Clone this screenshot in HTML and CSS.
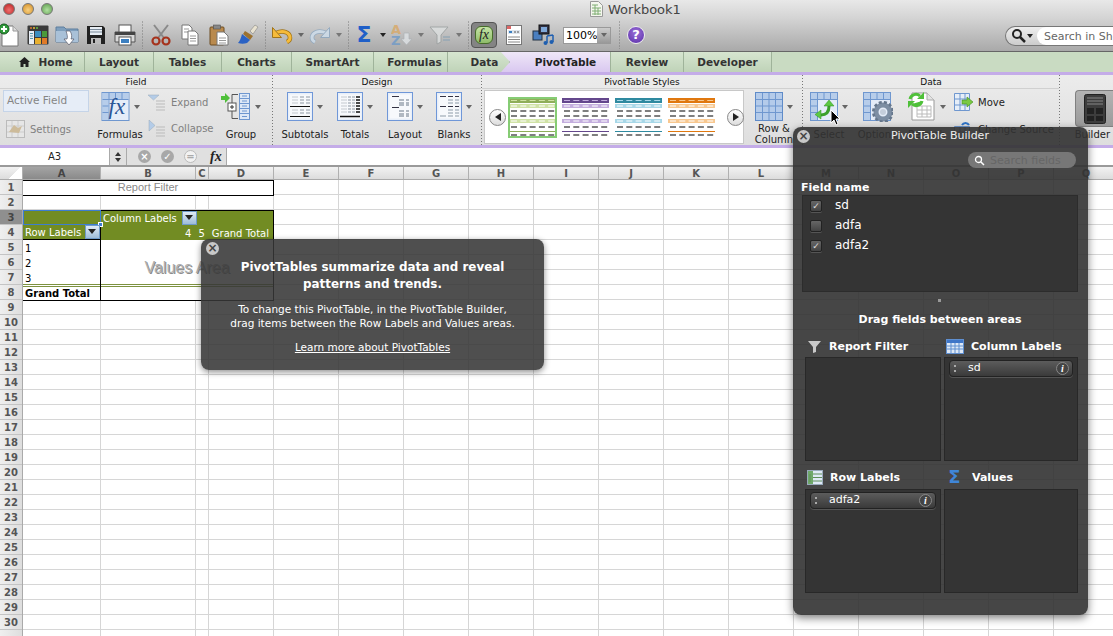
FILE: index.html
```html
<!DOCTYPE html>
<html>
  <head>
    <title>Workbook1</title>
    <link rel="stylesheet" href="styles.css">
  </head>
  <body>
    <svg class="defs" width="0" height="0">
      <symbol id="grid" viewBox="0 0 28 29">
        <rect x=".5" y=".5" width="27" height="28" fill="#e4ecf8" stroke="#6f97cf"/>
        <path d="M1 1h26v6H1zM1 7h6v21H1z" fill="#b7cdea"/>
        <path d="M7.500 1v27M14 1v6M20.500 1v6M1 7.500h26M1 14h6M1 20.500h6" stroke="#6f97cf" fill="none"/>
      </symbol>
      <symbol id="grid2" viewBox="0 0 28 29">
        <rect x=".5" y=".5" width="27" height="28" fill="#b4cbea" stroke="#5f8bc8"/>
        <path d="M7.500 1v27M14 1v27M20.500 1v27M1 7.500h26M1 14h26M1 20.500h26" stroke="#6f97cf" fill="none"/>
      </symbol>
      <symbol id="sheet" viewBox="0 0 26 29">
        <rect x=".5" y=".5" width="25" height="28" fill="#e8eff9" stroke="#6f97d8"/>
        <rect x="2.500" y="2.500" width="21" height="24" fill="#f7f9fc"/>
      </symbol>
      <symbol id="thumb" viewBox="0 0 47 39">
        <rect width="47" height="39" fill="#fff"/>
        <rect width="47" height="5" fill="var(--d)"/>
        <rect y="6" width="47" height="4" fill="var(--l)"/>
        <rect y="21" width="47" height="4" fill="var(--l)"/>
        <rect y="33" width="47" height="1" fill="var(--d)"/>
        <path d="M2 2.500h44" stroke="var(--l)" stroke-dasharray="6 3.300" fill="none"/>
        <path d="M2 8h44M2 23h44" stroke="#fff" stroke-dasharray="6 3.300" fill="none"/>
        <path d="M2 13h44M2 18h44M2 29h44M2 37h44" stroke="#555" stroke-width="1.500" stroke-dasharray="6 3.300" fill="none"/>
      </symbol>
    </svg>

    <div class="titlebar">
      <div class="lights">
        <span class="light red"></span>
        <span class="light amber"></span>
        <span class="light green"></span>
      </div>
      <div class="title">
        <svg width="13" height="16" viewBox="0 0 13 16"><path d="M.5.5h8l4 4v11H.5z" fill="#f4f6ee" stroke="#999"/><path d="M2 4h6M2 7h9M2 10h9M2 13h9M5 4v10M8 7v7" stroke="#7fae72" fill="none"/></svg>
        <span>Workbook1</span>
      </div>
    </div>

    <div class="toolbar">
      <span class="slot first">
        <svg width="22" height="24" viewBox="0 0 22 24"><path d="M4 3h11l5 5v15H4z" fill="#fff" stroke="#777"/><path d="M15 3v5h5" fill="#ddd" stroke="#999"/><circle cx="6" cy="6" r="5" fill="#2f9a3a" stroke="#14581c"/><path d="M6 3v6M3 6h6" stroke="#fff" stroke-width="2"/></svg>
      </span>
      <span class="slot">
        <svg width="22" height="20" viewBox="0 0 22 20"><rect x=".5" y=".5" width="21" height="19" rx="1" fill="#3a3a3a"/><circle cx="4" cy="3" r="1" fill="#d73"/><circle cx="7" cy="3" r="1" fill="#eb3"/><circle cx="10" cy="3" r="1" fill="#6b4"/><rect x="2" y="6" width="5" height="13" fill="#e8eef6"/><path d="M3 8.500h3M3 11h3M3 13.500h3" stroke="#59a"/><rect x="8" y="6" width="6" height="6" fill="#3c8fc0"/><rect x="15" y="6" width="5" height="6" fill="#4a9a3a"/><rect x="8" y="13" width="6" height="6" fill="#e8b030"/><rect x="15" y="13" width="5" height="6" fill="#e07a28"/></svg>
      </span>
      <span class="slot">
        <svg width="24" height="22" viewBox="0 0 24 22"><path d="M1 3h8l2 2h12v13H1z" fill="#7f9fbd" stroke="#5f7f9e"/><path d="M1 7h22v11H1z" fill="#a9c1d8"/><path d="M11 7h4c2 3 2 6 1 8h3l-5 6-5-6h3c1-2 0-5-1-8z" fill="#fff" stroke="#445" stroke-width=".6"/></svg>
      </span>
      <span class="slot">
        <svg width="20" height="20" viewBox="0 0 20 20"><path d="M1 1h16l2 2v16H1z" fill="#222"/><rect x="4" y="2" width="12" height="8" fill="#e8eef4"/><rect x="5" y="13" width="10" height="6" fill="#bbb"/><rect x="7" y="14" width="2" height="4" fill="#222"/><path d="M4 4.500h12M4 7h12" stroke="#7a8a9a"/></svg>
      </span>
      <span class="slot">
        <svg width="24" height="22" viewBox="0 0 24 22"><rect x="6" y="1" width="12" height="8" fill="#fff" stroke="#555"/><path d="M2 8h20v10H2z" fill="#d8d8d8" stroke="#555"/><rect x="2" y="8" width="20" height="3" fill="#444"/><rect x="6" y="13" width="12" height="8" fill="#fff" stroke="#555"/><rect x="8" y="15" width="8" height="4" fill="#3c7fc0"/></svg>
      </span>
      <span class="tb-sep"></span>
      <span class="slot">
        <svg width="20" height="22" viewBox="0 0 20 22"><path d="M3 1l10 13M17 1L7 14" stroke="#8a8a8a" stroke-width="2" fill="none"/><circle cx="5" cy="17" r="3.500" fill="none" stroke="#a5331d" stroke-width="2.200"/><circle cx="15" cy="17" r="3.500" fill="none" stroke="#a5331d" stroke-width="2.200"/></svg>
      </span>
      <span class="slot">
        <svg width="20" height="22" viewBox="0 0 20 22"><path d="M2 1h7l3 3v11H2z" fill="#fff" stroke="#777"/><path d="M4 5h5M4 8h5" stroke="#999"/><path d="M8 7h7l3 3v11H8z" fill="#fff" stroke="#777"/><path d="M10 12h6M10 14.500h6M10 17h6" stroke="#999"/></svg>
      </span>
      <span class="slot">
        <svg width="20" height="22" viewBox="0 0 20 22"><rect x="1" y="3" width="14" height="18" rx="1" fill="#b98a4e" stroke="#6d4d22"/><rect x="4.500" y="1" width="7" height="4" fill="#888" stroke="#444" stroke-width=".5"/><path d="M8 8h7l4 4v9H8z" fill="#fff" stroke="#777"/><path d="M10 14h7M10 16.500h7M10 19h7" stroke="#999"/></svg>
      </span>
      <span class="slot">
        <svg width="22" height="22" viewBox="0 0 22 22"><path d="M13 7l5-6 3 2-5 7z" fill="#e8e2d0" stroke="#777" stroke-width=".5"/><path d="M8 7l8 5-3 4-7-6z" fill="#9c7230"/><path d="M5 10l8 6-3 3c-3 1-6 1-9 0 2-2 3-5 4-9z" fill="#2b62c4"/></svg>
      </span>
      <span class="tb-sep short"></span>
      <span class="split">
        <svg width="22" height="18" viewBox="0 0 22 18"><path d="M5 7c7-3 14-1 14 5 0 2-1 3-3 4" fill="none" stroke="#a07418" stroke-width="4.500"/><path d="M5 7c7-3 14-1 14 5 0 2-1 3-3 4" fill="none" stroke="#f6bb3a" stroke-width="3"/><path d="M1.500 1.500v10h9z" fill="#f6bb3a" stroke="#a07418"/></svg>
        <i class="drop"></i>
      </span>
      <span class="split dim">
        <svg width="22" height="18" viewBox="0 0 22 18"><path d="M17 7C10 4 3 6 3 12c0 2 1 3 3 4" fill="none" stroke="#8aa5bf" stroke-width="4.500"/><path d="M17 7C10 4 3 6 3 12c0 2 1 3 3 4" fill="none" stroke="#cfdfee" stroke-width="3"/><path d="M20.500 1.500v10h-9z" fill="#cfdfee" stroke="#8aa5bf"/></svg>
        <i class="drop"></i>
      </span>
      <span class="tb-sep tiny"></span>
      <span class="split">
        <span class="sigma">Σ</span>
        <i class="drop dark"></i>
      </span>
      <span class="split dim">
        <svg width="24" height="24" viewBox="0 0 24 24"><text x="1" y="11" class="az-a">A</text><text x="1" y="22" class="az-z">Z</text><path d="M14 10h5v6h3l-5.500 6L11 16h3z" fill="#dfe3e6" stroke="#aab0b5" stroke-width=".7"/></svg>
        <i class="drop"></i>
      </span>
      <span class="split dim">
        <svg width="22" height="20" viewBox="0 0 22 20"><path d="M1 2h18l-7 8v7l-4 2v-9z" fill="#dde0e0" stroke="#9a9f9f"/><path d="M14 12h7M14 15h7" stroke="#8fa5b5" stroke-width="1.500"/></svg>
        <i class="drop"></i>
      </span>
      <span class="tb-sep tiny"></span>
      <span class="fx-btn"><span class="fx-inner">fx</span></span>
      <span class="slot gap2">
        <svg width="16" height="20" viewBox="0 0 16 20"><rect x=".5" y=".5" width="15" height="19" fill="#fff" stroke="#777"/><rect x="1" y="1" width="4" height="3" fill="#d66"/><rect x="2" y="5" width="12" height="4" fill="#dfe6ee"/><rect x="3" y="6" width="3" height="2" fill="#3c7fc0"/><path d="M8 7h2M11 7h2" stroke="#555"/><path d="M2 12h12M2 14.500h12M2 17h12" stroke="#888"/></svg>
      </span>
      <span class="slot">
        <svg width="22" height="22" viewBox="0 0 22 22"><rect x="1" y="7" width="9" height="9" fill="#4a7fc0" stroke="#234"/><rect x="7" y="1" width="10" height="9" fill="#334" stroke="#111"/><path d="M9 3h6v5H9z" fill="#7fa8d8"/><path d="M15 12v7M21 11v7M15 12l6-1" stroke="#1f5fb0" stroke-width="1.500" fill="none"/><circle cx="13.500" cy="19" r="2" fill="#1f5fb0"/><circle cx="19.500" cy="18" r="2" fill="#1f5fb0"/></svg>
      </span>
      <span class="zoom"><span class="zoom-val">100%</span><span class="zoom-arrow"><i class="drop"></i></span></span>
      <span class="tb-sep wide"></span>
      <span class="help">?</span>
      <span class="search">
        <span class="search-mode">
          <svg width="15" height="15" viewBox="0 0 15 15"><circle cx="6" cy="6" r="4" fill="none" stroke="#222" stroke-width="2"/><path d="M9 9l5 5" stroke="#222" stroke-width="2.500"/></svg>
          <i class="drop dark"></i>
        </span>
        <span class="search-input">Search in Sheet</span>
      </span>
    </div>

    <div class="tabs">
      <span class="tab t-home"><svg width="11" height="10" viewBox="0 0 11 10"><path d="M5.500 0L11 5H9.500v5h-3V7h-2v3h-3V5H0z" fill="#222"/></svg>Home</span>
      <span class="tab t-layout">Layout</span>
      <span class="tab t-tables">Tables</span>
      <span class="tab t-charts">Charts</span>
      <span class="tab t-smart">SmartArt</span>
      <span class="tab t-formulas">Formulas</span>
      <span class="tab t-data">Data</span>
      <span class="tab t-pivot">PivotTable</span>
      <span class="tab t-review">Review</span>
      <span class="tab t-dev">Developer</span>
    </div>

    <div class="ribbon">
      <section class="group g-field">
        <h4>Field</h4>
        <div class="group-body">
          <div class="field-col">
            <div class="active-field">Active Field</div>
            <div class="small-row faded">
              <svg width="19" height="18" viewBox="0 0 19 18"><rect x=".5" y=".5" width="18" height="17" fill="#e6e6e6" stroke="#bbb"/><path d="M1 6h17M1 12h17M6 1v16M12 1v16" stroke="#ccc"/><path d="M3 12l5-7 4 3 4-2-3 7z" fill="#cdbb9a"/></svg>
              <span>Settings</span>
            </div>
          </div>
          <div class="big w50">
            <div class="big-icon">
              <span class="fx-icon"><svg width="29" height="29"><use href="#grid"/></svg><em>fx</em></span>
              <i class="drop"></i>
            </div>
            <span class="label">Formulas</span>
          </div>
          <div class="small-col w70">
            <div class="small-row faded">
              <svg width="18" height="17" viewBox="0 0 18 17"><path d="M0 1h11L5.500 6z" fill="#b4cce8" stroke="#9ab" stroke-width=".5"/><path d="M8 7h9M8 10h9M8 13h9M8 16h9" stroke="#bbb"/></svg>
              <span>Expand</span>
            </div>
            <div class="small-row faded">
              <svg width="18" height="17" viewBox="0 0 18 17"><path d="M1 0v11l6-5.500z" fill="#b4cce8" stroke="#9ab" stroke-width=".5"/><path d="M8 7h9M8 10h9M8 13h9M8 16h9" stroke="#bbb"/></svg>
              <span>Collapse</span>
            </div>
          </div>
          <div class="big w46">
            <div class="big-icon">
              <svg width="30" height="29" viewBox="0 0 30 29"><path d="M0 4h4V1l5 5-5 5V8H0z" fill="#4fc03a"/><path d="M17 2.500h-6v24h6" fill="none" stroke="#555"/><rect x="7" y="11" width="8" height="8" fill="#fff" stroke="#555"/><path d="M9 15h4M11 13v4" stroke="#333"/><rect x="18.500" y="1.500" width="10" height="26" fill="#dfe9f6" stroke="#6f97cf"/><path d="M18 6.500h11M18 11.500h11M18 16.500h11M18 21.500h11M21 4h5M21 9h5M21 14h5M21 19h5M21 24.500h5" stroke="#6f97cf"/></svg>
              <i class="drop"></i>
            </div>
            <span class="label">Group</span>
          </div>
        </div>
      </section>

      <section class="group g-design">
        <h4>Design</h4>
        <div class="group-body">
          <div class="big w50">
            <div class="big-icon">
              <svg width="26" height="29" viewBox="0 0 26 29"><use href="#sheet" width="26" height="29"/><path d="M5 5h6M5 8h6M5 11h6M5 18h6M5 21h6" stroke="#c4c9cf"/><path d="M13 5h4M19 5h4M13 8h4M19 8h4M13 11h4M19 11h4M13 18h4M19 18h4M13 21h4M19 21h4" stroke="#8d97a3"/><path d="M3 14.500h20M3 24.500h20" stroke="#111"/></svg>
              <i class="drop"></i>
            </div>
            <span class="label">Subtotals</span>
          </div>
          <div class="big w50">
            <div class="big-icon">
              <svg width="26" height="29" viewBox="0 0 26 29"><use href="#sheet" width="26" height="29"/><path d="M4 5h6M4 8h6M4 11h6M4 14h6M4 17h6M4 20h6" stroke="#c4c9cf"/><path d="M11 5h3M15 5h3M11 8h3M15 8h3M11 11h3M15 11h3M11 14h3M15 14h3M11 17h3M15 17h3M11 20h3M15 20h3" stroke="#8d97a3"/><path d="M19 5h4M19 8h4M19 11h4M19 14h4M19 17h4M19 20h4" stroke="#111" stroke-width="1.500"/><path d="M3 24.500h20" stroke="#111" stroke-width="1.500"/></svg>
              <i class="drop"></i>
            </div>
            <span class="label">Totals</span>
          </div>
          <div class="big w50">
            <div class="big-icon">
              <svg width="26" height="29" viewBox="0 0 26 29"><use href="#sheet" width="26" height="29"/><path d="M5 4.500h7M5 15.500h7" stroke="#334" stroke-width="1.200"/><path d="M12 8h5M19 8h3M12 11h5M19 11h3M12 13h5M19 13h3M12 19h5M19 19h3M12 22h5M19 22h3M12 24h5M19 24h3" stroke="#6a7888"/></svg>
              <i class="drop"></i>
            </div>
            <span class="label">Layout</span>
          </div>
          <div class="big w48">
            <div class="big-icon">
              <svg width="26" height="29" viewBox="0 0 26 29"><use href="#sheet" width="26" height="29"/><path d="M4 4.500h6M12 4.500h5M19 4.500h4M4 14.500h6M12 14.500h5M19 14.500h4" stroke="#334" stroke-width="1.200"/><path d="M12 8h5M19 8h4M12 11h5M19 11h4M12 18h5M19 18h4M12 21h5M19 21h4M4 24h6M12 24h5M19 24h4" stroke="#8d9ba8"/></svg>
              <i class="drop"></i>
            </div>
            <span class="label">Blanks</span>
          </div>
        </div>
      </section>

      <section class="group g-styles">
        <h4>PivotTable Styles</h4>
        <div class="group-body">
          <div class="gallery">
            <span class="round">
              <svg width="6" height="8" viewBox="0 0 6 8"><path d="M6 0v8L0 4z" fill="#222"/></svg>
            </span>
            <svg class="thumb t-green" width="47" height="39"><use href="#thumb"/></svg>
            <svg class="thumb t-purple" width="47" height="39"><use href="#thumb"/></svg>
            <svg class="thumb t-blue" width="47" height="39"><use href="#thumb"/></svg>
            <svg class="thumb t-orange" width="47" height="39"><use href="#thumb"/></svg>
            <span class="round next">
              <svg width="6" height="8" viewBox="0 0 6 8"><path d="M0 0v8l6-4z" fill="#222"/></svg>
            </span>
          </div>
          <div class="big w58">
            <div class="big-icon">
              <svg width="28" height="29"><use href="#grid2"/></svg>
              <i class="drop"></i>
            </div>
            <span class="label two">Row &amp;<br>Column</span>
          </div>
        </div>
      </section>

      <section class="group g-data">
        <h4>Data</h4>
        <div class="group-body">
          <div class="big w46">
            <div class="big-icon">
              <span class="fx-icon">
                <svg width="28" height="29"><use href="#grid"/></svg>
                <svg class="over" width="28" height="29" viewBox="0 0 28 29"><path d="M11 23c5 0 8-3 8-9" fill="none" stroke="#3aa02c" stroke-width="3"/><path d="M11 18v9l-6-4.500zM14 14h10l-5-6z" fill="#5cc944" stroke="#2f8f20" stroke-width=".5"/></svg>
              </span>
              <i class="drop"></i>
            </div>
            <span class="label">Select</span>
          </div>
          <div class="big w50">
            <div class="big-icon">
              <span class="fx-icon">
                <svg width="28" height="29"><use href="#grid"/></svg>
                <svg class="over" width="30" height="30" viewBox="0 0 30 30"><circle cx="20" cy="20" r="7" fill="none" stroke="#7d8ea3" stroke-width="5"/><circle cx="20" cy="20" r="9.800" fill="none" stroke="#66778c" stroke-width="2.500" stroke-dasharray="3 2.200"/><circle cx="20" cy="20" r="3" fill="#c5cedb"/></svg>
              </span>
            </div>
            <span class="label">Options</span>
          </div>
          <div class="big w46 ml2">
            <div class="big-icon">
              <span class="fx-icon">
                <svg width="28" height="29" viewBox="0 0 28 29"><path d="M4 1h15l7 7v20H4z" fill="#fff" stroke="#999"/><path d="M19 1v7h7" fill="#e4e4e4" stroke="#aaa"/><path d="M9 14h14v11H9zM9 18h14M9 22h14M14 14v11M19 14v11" fill="none" stroke="#bbb"/></svg>
                <svg class="over" width="28" height="29" viewBox="0 0 28 29"><path d="M2 7a6 6 0 0 1 10-3" fill="none" stroke="#4fc03a" stroke-width="3"/><path d="M9 7h7V0zM14 9a6 6 0 0 1-10 3" fill="#4fc03a"/><path d="M14 9a6 6 0 0 1-10 3" fill="none" stroke="#4fc03a" stroke-width="3"/><path d="M7 9H0v7z" fill="#4fc03a"/></svg>
              </span>
              <i class="drop"></i>
            </div>
            <span class="label">Refresh</span>
          </div>
          <div class="small-col move-col">
            <div class="small-row">
              <svg width="19" height="18" viewBox="0 0 19 18"><path d="M.5.5h15v17H.5zM.5 6h15M.5 12h15M6 .5v17M11 .5v17" fill="#e6eef8" stroke="#6f97cf"/><path d="M8 7h5V4l6 5-6 5v-3H8z" fill="#7ac943" stroke="#3f8f1f" stroke-width=".6"/></svg>
              <span class="dark">Move</span>
            </div>
            <div class="small-row">
              <svg width="19" height="18" viewBox="0 0 19 18"><path d="M.5 6.500h15v11H.5zM.5 12h15M6 6v12M11 6v12" fill="#e6eef8" stroke="#6f97cf"/><path d="M8 5a4 4 0 0 1 7 0" fill="none" stroke="#2f74c8" stroke-width="2"/></svg>
              <span class="dark">Change Source</span>
            </div>
          </div>
        </div>
      </section>

      <section class="group g-builder">
        <div class="builder-btn">
          <svg width="22" height="30" viewBox="0 0 22 30"><rect x=".5" y=".5" width="21" height="29" rx="2" fill="#3d3d3d" stroke="#222"/><path d="M3 4h16M3 7h16M3 10h16" stroke="#888"/><rect x="3" y="14" width="7" height="6" fill="#222"/><rect x="12" y="14" width="7" height="6" fill="#222"/><rect x="3" y="22" width="7" height="5" fill="#222"/><rect x="12" y="22" width="7" height="5" fill="#222"/></svg>
        </div>
        <span class="label builder-label">Builder</span>
      </section>
    </div>

    <div class="formula-bar">
      <div class="name-box">A3</div>
      <div class="stepper"><i class="up"></i><i class="down"></i></div>
      <div class="fx-tools">
        <span class="circle">×</span>
        <span class="circle">✓</span>
        <span class="circle pale">=</span>
        <span class="fx-label">fx</span>
      </div>
      <div class="formula-input"></div>
    </div>

    <div class="col-head">
      <span class="corner"></span>
      <span class="ch w-a selected">A</span>
      <span class="ch w-b">B</span>
      <span class="ch w-c">C</span>
      <span class="ch w-d">D</span>
      <span class="ch">E</span><span class="ch">F</span><span class="ch">G</span><span class="ch">H</span><span class="ch">I</span>
      <span class="ch">J</span><span class="ch">K</span><span class="ch">L</span><span class="ch">M</span><span class="ch">N</span>
      <span class="ch">O</span><span class="ch">P</span><span class="ch">Q</span>
    </div>

    <div class="sheet">
      <div class="row-head">
        <span>1</span><span>2</span><span class="selected">3</span><span>4</span><span>5</span><span>6</span><span>7</span><span>8</span><span>9</span><span>10</span>
        <span>11</span><span>12</span><span>13</span><span>14</span><span>15</span><span>16</span><span>17</span><span>18</span><span>19</span><span>20</span>
        <span>21</span><span>22</span><span>23</span><span>24</span><span>25</span><span>26</span><span>27</span><span>28</span><span>29</span><span>30</span><span></span>
      </div>
      <div class="cells">
        <div class="pivot">
          <div class="pv-filter">Report Filter</div>
          <div class="pv-a3"><i class="corner-handle"></i></div>
          <div class="pv-a4">Row Labels<i class="filter-btn"></i></div>
          <div class="pv-head">
            <div class="pv-collabels">Column Labels<i class="filter-btn"></i></div>
            <div class="pv-colvals"><span>4</span><span>5</span><span>Grand Total</span></div>
          </div>
          <div class="pv-rows">
            <span>1</span><span>2</span><span>3</span>
            <span class="total">Grand Total</span>
          </div>
          <div class="pv-values"><span>Values Area</span></div>
        </div>
      </div>
    </div>

    <div class="bubble">
      <span class="close">×</span>
      <h3>PivotTables summarize data and reveal<br>patterns and trends.</h3>
      <p>To change this PivotTable, in the PivotTable Builder,<br>drag items between the Row Labels and Values areas.</p>
      <a class="learn">Learn more about PivotTables</a>
    </div>

    <div class="builder">
      <div class="builder-title">
        <span class="close">×</span>
        <span>PivotTable Builder</span>
      </div>
      <div class="builder-search">
        <svg width="11" height="11" viewBox="0 0 11 11"><circle cx="4.500" cy="4.500" r="3" fill="none" stroke="#fff" stroke-width="1.300"/><path d="M7 7l3 3" stroke="#fff" stroke-width="1.500"/></svg>
        <span>Search fields</span>
      </div>
      <div class="field-name">Field name</div>
      <div class="field-list">
        <div class="field"><i class="check on"></i>sd</div>
        <div class="field"><i class="check"></i>adfa</div>
        <div class="field"><i class="check on"></i>adfa2</div>
      </div>
      <div class="sash"></div>
      <div class="drag-title">Drag fields between areas</div>
      <div class="areas">
        <div class="area">
          <div class="area-title">
            <svg width="15" height="15" viewBox="0 0 15 15"><path d="M1 2h13L9 8v5l-3 1V8z" fill="#c9c9c9"/></svg>
            <span>Report Filter</span>
          </div>
          <div class="area-box"></div>
        </div>
        <div class="area">
          <div class="area-title">
            <svg width="18" height="15" viewBox="0 0 18 15"><rect x=".5" y=".5" width="17" height="14" fill="#dfe9f6" stroke="#5f8fd0"/><rect x="1" y="1" width="16" height="3" fill="#3f76c8"/><path d="M1 7h16M1 10h16M5 4v10M9 4v10M13 4v10" stroke="#5f8fd0"/></svg>
            <span>Column Labels</span>
          </div>
          <div class="area-box">
            <div class="pill"><i class="grip"></i><span>sd</span><i class="info">i</i></div>
          </div>
        </div>
        <div class="area">
          <div class="area-title">
            <svg width="16" height="15" viewBox="0 0 16 15"><rect x=".5" y=".5" width="15" height="14" fill="#dfe9f6" stroke="#9ab"/><rect x="1" y="1" width="5" height="13" fill="#6fa86a"/><path d="M6 4h9M6 7.500h9M6 11h9M3 4v8" stroke="#5f8f5a"/></svg>
            <span>Row Labels</span>
          </div>
          <div class="area-box">
            <div class="pill"><i class="grip"></i><span>adfa2</span><i class="info">i</i></div>
          </div>
        </div>
        <div class="area">
          <div class="area-title">
            <span class="sigma small">Σ</span>
            <span>Values</span>
          </div>
          <div class="area-box"></div>
        </div>
      </div>
    </div>

    <svg class="cursor" width="12" height="17" viewBox="0 0 12 17"><path d="M1 1v13l3-3 2 5 2-1-2-5h4z" fill="#000" stroke="#fff"/></svg>
  </body>
</html>
```

FILE: styles.css
```css
* {
  box-sizing: border-box;
}
html, body {
  margin: 0;
  height: 636px;
  overflow: hidden;
}
body {
  position: relative;
  background: #fff;
  font-family: "DejaVu Sans", sans-serif;
  font-size: 10px;
  color: #222;
}
i {
  font-style: normal;
}
.defs {
  position: absolute;
}

/* title + toolbar */
.titlebar {
  height: 18px;
  display: flex;
  background: linear-gradient(#e8e8e8, #d4d4d4);
}
.lights {
  display: flex;
  gap: 7px;
  padding: 3px 0 0 3px;
}
.light {
  width: 12px;
  height: 12px;
  border-radius: 50%;
  border: 1px solid #777;
}
.light.red { background: radial-gradient(circle at 50% 60%, #f07070, #b81e1e); }
.light.amber { background: radial-gradient(circle at 50% 60%, #f8d080, #d08a20); }
.light.green { background: radial-gradient(circle at 50% 60%, #b0e0a0, #5a9a4a); }
.title {
  position: absolute;
  left: 590px;
  top: 1px;
  display: flex;
  align-items: center;
  gap: 5px;
  font-size: 13px;
  color: #444;
}
.toolbar {
  height: 34px;
  display: flex;
  align-items: center;
  padding-top: 1px;
  background: linear-gradient(#d4d4d4, #a9a9a9);
  border-bottom: 1px solid #666;
}
.slot {
  width: 29px;
  flex: none;
  display: flex;
  justify-content: center;
  align-items: center;
}
.slot.first { margin-left: -6px; }
.slot.gap2 { margin-left: 2px; }
.tb-sep {
  flex: none;
  width: 7px;
  height: 28px;
  background: linear-gradient(#777 50%, transparent 50%) center / 1px 3px repeat-y;
}
.tb-sep.tiny { width: 6px; }
.tb-sep.wide { width: 16px; }
.tb-sep.short { width: 7px; }
.split {
  width: 38px;
  flex: none;
  display: flex;
  align-items: center;
}
.split > :first-child {
  width: 26px;
  flex: none;
  text-align: center;
}
.split .drop { margin-left: 3px; }
.split.dim { opacity: .8; }
.drop {
  display: inline-block;
  flex: none;
  width: 0;
  height: 0;
  border: 3.500px solid transparent;
  border-bottom: 0;
  border-top: 4px solid #666;
}
.drop.dark { border-top-color: #222; }
.sigma {
  color: #1f5fc8;
  font: bold 22px/24px "DejaVu Sans", sans-serif;
}
.az-a {
  font: bold 13px "DejaVu Sans", sans-serif;
  fill: #d9a866;
}
.az-z {
  font: bold 13px "DejaVu Sans", sans-serif;
  fill: #6f9ac8;
}
.fx-btn {
  width: 26px;
  height: 26px;
  flex: none;
  padding: 3px;
  background: #848484;
  border: 1px solid #555;
  border-radius: 4px;
}
.fx-inner {
  display: block;
  height: 18px;
  background: linear-gradient(#c5e4a5, #8fbc6a);
  border: 1px solid #476d2a;
  border-radius: 6px;
  text-align: center;
  font: italic 14px/15px "Liberation Serif", serif;
}
.zoom {
  width: 48px;
  height: 17px;
  margin-left: 6px;
  flex: none;
  display: flex;
  border: 1px solid #999;
}
.zoom-val {
  flex: 1;
  background: #fff;
  font-size: 11px;
  line-height: 15px;
  padding-left: 2px;
  color: #000;
}
.zoom-arrow {
  width: 14px;
  background: linear-gradient(#ccc, #999);
  display: flex;
  align-items: center;
  justify-content: center;
}
.help {
  width: 18px;
  height: 18px;
  flex: none;
  border-radius: 50%;
  background: radial-gradient(circle at 50% 35%, #9a6fd8, #5a2ea8);
  border: 1px solid #eee;
  color: #fff;
  font: bold 13px/16px "DejaVu Sans", sans-serif;
  text-align: center;
}
.search {
  margin-left: auto;
  margin-top: 1px;
  width: 108px;
  flex: none;
  display: flex;
  height: 20px;
  overflow: hidden;
  border: 1px solid #777;
  border-right: 0;
  border-radius: 10px 0 0 10px;
  background: linear-gradient(#eee, #ccc);
}
.search-mode {
  width: 31px;
  flex: none;
  display: flex;
  align-items: center;
  padding-left: 5px;
  gap: 1px;
}
.search-input {
  flex: 1;
  background: #fff;
  border-radius: 10px 0 0 10px;
  padding-left: 7px;
  font-size: 11px;
  line-height: 19px;
  color: #666;
  white-space: nowrap;
  overflow: hidden;
}

/* tabs */
.tabs {
  height: 23px;
  display: flex;
  background: #c9dbc2;
  border-bottom: 3px solid #c4ace8;
}
.tab {
  display: flex;
  align-items: center;
  justify-content: center;
  gap: 8px;
  flex: none;
  font-size: 10.500px;
  font-weight: bold;
  color: #333;
  border-right: 1px solid #9fb39a;
  background: linear-gradient(#d6e5d0, #bfd3b8);
}
.t-home { width: 85px; padding-left: 8px; }
.t-layout { width: 69px; }
.t-tables { width: 68px; }
.t-charts { width: 70px; }
.t-smart { width: 82px; }
.t-formulas { width: 74px; padding-left: 8px; }
.t-data { width: 62px; padding-left: 12px; }
.t-pivot {
  width: 110px;
  margin-left: -9px;
  padding-left: 20px;
  border-right: 1px solid #9fb39a;
  background: linear-gradient(#efe7f8, #d9c8f0);
  color: #222;
  clip-path: polygon(0 0, 100% 0, 100% 100%, 0 100%, 9px 50%);
}
.t-review { width: 73px; }
.t-dev { width: 88px; }

/* ribbon */
.ribbon {
  height: 73px;
  display: flex;
  background: linear-gradient(#ececec, #dedede);
  border-bottom: 3px solid #c4ace8;
}
.group {
  flex: none;
  display: flex;
  flex-direction: column;
  background: linear-gradient(#777 50%, transparent 50%) right top / 1px 3px repeat-y;
  padding-right: 1px;
}
.group h4 {
  margin: 0;
  height: 14px;
  font-size: 9px;
  font-weight: normal;
  line-height: 15px;
  text-align: center;
  color: #111;
  border-bottom: 1px solid #d0d0d0;
}
.group-body {
  display: flex;
  flex: 1;
}
.g-field { width: 273px; }
.g-design { width: 209px; }
.g-styles { width: 321px; }
.g-data { width: 257px; }
.g-builder {
  width: 53px;
  background: none;
  align-items: flex-end;
  padding: 15px 0 0;
}
.g-field .group-body { padding-left: 3px; }
.g-design .group-body { padding-left: 7px; }
.g-styles .group-body { padding-left: 2px; }
.g-data .group-body { padding-left: 3px; }
.field-col {
  width: 86px;
  margin-right: 6px;
  flex: none;
}
.active-field {
  height: 22px;
  margin-top: 1px;
  margin-bottom: 8px;
  padding-left: 3px;
  background: #e6edf7;
  border: 1px solid #c5d4e8;
  font-size: 10.500px;
  line-height: 19px;
  color: #858585;
}
.big {
  flex: none;
  display: flex;
  flex-direction: column;
  align-items: center;
  padding-top: 3px;
}
.w46 { width: 46px; }
.w48 { width: 48px; }
.w50 { width: 50px; }
.w58 { width: 58px; margin-left: 1px; }
.w70 { width: 70px; margin-left: 3px; }
.ml2 { margin-left: 2px; }
.big-icon {
  height: 29px;
  display: flex;
  align-items: center;
  gap: 4px;
}
.label {
  margin-top: 8px;
  line-height: 12px;
  font-size: 10px;
  color: #222;
  white-space: nowrap;
  text-align: center;
}
.label.two {
  margin-top: 2px;
  line-height: 11px;
}
.small-col {
  flex: none;
  padding-top: 4px;
  display: flex;
  flex-direction: column;
  gap: 8px;
}
.move-col {
  margin-left: 4px;
  width: 104px;
  gap: 9px;
}
.small-row {
  height: 18px;
  display: flex;
  align-items: center;
  gap: 5px;
  white-space: nowrap;
}
.field-col .small-row { padding-left: 3px; }
.small-row.faded { color: #808080; }
.small-row .dark { color: #222; }
.fx-icon {
  position: relative;
  display: block;
  height: 29px;
}
.fx-icon em {
  position: absolute;
  left: 8px;
  top: 2px;
  font: italic 23px/25px "Liberation Serif", serif;
  color: #2a5596;
}
.over {
  position: absolute;
  left: 0;
  top: 0;
}
.gallery {
  width: 260px;
  height: 54px;
  margin-top: 1px;
  flex: none;
  display: flex;
  align-items: center;
  padding: 0 4px 0 4px;
  background: #fff;
  border: 1px solid #c8c8c8;
}
.round {
  width: 17px;
  height: 17px;
  flex: none;
  display: flex;
  align-items: center;
  justify-content: center;
  border: 1px solid #888;
  border-radius: 50%;
  background: linear-gradient(#fff, #ddd);
  margin-right: 3px;
}
.round.next {
  margin: 0 0 0 6px;
}
.thumb {
  flex: none;
  margin-right: 6px;
}
.t-green { --d: #8fae5a; --l: #d0e2a6; outline: 2px solid #86cc74; outline-offset: -1px; }
.t-purple { --d: #64478c; --l: #c4aede; }
.t-blue { --d: #2f8aa0; --l: #a8d8e8; }
.t-orange { --d: #e0780f; --l: #f8c890; }
.builder-btn {
  width: 38px;
  height: 37px;
  display: flex;
  align-items: center;
  justify-content: center;
  background: linear-gradient(#b4b4b4, #9a9a9a);
  border: 1px solid #808080;
  border-right: 0;
  border-radius: 4px 0 0 4px;
}
.builder-label {
  margin: 2px 3px 0 0;
}

/* formula bar */
.formula-bar {
  height: 19px;
  display: flex;
  background: #fff;
  border-bottom: 2px solid #9a9a9a;
}
.name-box {
  width: 109px;
  font-size: 10px;
  line-height: 17px;
  text-align: center;
}
.stepper {
  width: 18px;
  display: flex;
  flex-direction: column;
  align-items: center;
  justify-content: center;
  gap: 2px;
  background: #e0e0e0;
  border-left: 1px solid #aaa;
  border-right: 1px solid #aaa;
}
.stepper .up, .stepper .down {
  width: 0;
  height: 0;
  border: 3px solid transparent;
}
.stepper .up { border-top: 0; border-bottom: 4px solid #333; }
.stepper .down { border-bottom: 0; border-top: 4px solid #333; }
.fx-tools {
  width: 100px;
  display: flex;
  align-items: center;
  padding-left: 11px;
  gap: 10px;
  background: #e0e0e0;
  border-right: 1px solid #aaa;
}
.circle {
  width: 13px;
  height: 13px;
  flex: none;
  border-radius: 50%;
  background: #a8a8a8;
  color: #fff;
  font-weight: bold;
  font-size: 10px;
  line-height: 13px;
  text-align: center;
}
.circle.pale {
  background: #f2f2f2;
  border: 1px solid #bbb;
  color: #aaa;
  line-height: 11px;
}
.fx-label {
  margin-left: 3px;
  font: italic 14px/16px "Liberation Serif", serif;
  font-weight: bold;
}
.formula-input { flex: 1; }

/* sheet */
.col-head {
  height: 13px;
  display: flex;
  background: linear-gradient(#f2f2f2, #dcdcdc);
  border-bottom: 1px solid #aaa;
}
.corner {
  width: 23px;
  flex: none;
  border-right: 1px solid #b0b0b0;
  background: linear-gradient(135deg, transparent 60%, #fff 60%);
}
.ch {
  width: 65px;
  flex: none;
  text-align: center;
  font-weight: bold;
  font-size: 10px;
  line-height: 13px;
  color: #555;
  border-right: 1px solid #b0b0b0;
}
.ch.w-a { width: 78px; }
.ch.w-b { width: 95px; }
.ch.w-c { width: 13px; }
.ch.selected {
  background: linear-gradient(#a4a4a4, #8a8a8a);
  color: #444;
}
.sheet {
  display: flex;
  height: 456px;
}
.row-head {
  width: 23px;
  flex: none;
  display: flex;
  flex-direction: column;
  background: linear-gradient(90deg, #efefef, #dedede);
  border-right: 1px solid #aaa;
}
.row-head span {
  height: 15px;
  flex: none;
  text-align: center;
  font-weight: bold;
  font-size: 10px;
  line-height: 15px;
  color: #555;
  border-bottom: 1px solid #c4c4c4;
}
.row-head .selected {
  background: #8f8f8f;
  color: #444;
}
.cells {
  flex: 1;
  background:
    linear-gradient(#d6d6d6, #d6d6d6) 77px 0 / 1px 100% no-repeat,
    linear-gradient(#d6d6d6, #d6d6d6) 172px 0 / 1px 100% no-repeat,
    linear-gradient(#d6d6d6, #d6d6d6) 185px 0 / 1px 100% no-repeat,
    linear-gradient(#d6d6d6, #d6d6d6) 250px 0 / 1px 100% no-repeat,
    repeating-linear-gradient(90deg, transparent 0 64px, #d6d6d6 64px 65px) 251px 0 no-repeat,
    repeating-linear-gradient(transparent 0 14px, #d6d6d6 14px 15px);
}
.pivot {
  display: grid;
  grid-template-columns: 78px 173px;
  grid-template-rows: repeat(8, 15px);
  width: 251px;
  line-height: 15px;
}
.pv-filter {
  grid-row: 1;
  grid-column: 1 / 3;
  height: 16px;
  border: 1px solid #000;
  border-left: 0;
  text-align: center;
  background: #fff;
  color: #8a8a8a;
  font: 11px/13px "Liberation Sans", sans-serif;
}
.pv-a3 {
  grid-row: 3;
  grid-column: 1;
  position: relative;
  background: #728c23;
  border: 1px solid #3d7dd0;
}
.corner-handle {
  position: absolute;
  right: -3px;
  bottom: -3px;
  width: 5px;
  height: 5px;
  background: #3d7dd0;
  border: 1px solid #fff;
}
.pv-a4 {
  grid-row: 4;
  grid-column: 1;
  display: flex;
  justify-content: space-between;
  padding-left: 2px;
  background: #728c23;
  color: #fff;
  border-right: 1px solid #000;
  border-bottom: 1px solid #000;
  line-height: 16px;
}
.pv-head {
  grid-row: 3 / 5;
  grid-column: 2;
  height: 31px;
  background: #728c23;
  color: #fff;
  border: 1px solid #000;
  border-left: 0;
}
.pv-collabels {
  display: flex;
  height: 15px;
  padding-left: 2px;
  gap: 5px;
}
.pv-colvals {
  display: flex;
  justify-content: flex-end;
  gap: 7px;
  padding-right: 4px;
}
.filter-btn {
  width: 15px;
  height: 14px;
  flex: none;
  background: linear-gradient(#dfeaf5, #9dbcd8);
  border: 1px solid #6f9ac8;
  position: relative;
}
.filter-btn::after {
  content: "";
  position: absolute;
  left: 2px;
  top: 3px;
  border: 4px solid transparent;
  border-bottom: 0;
  border-top: 5px solid #222;
}
.pv-rows {
  grid-row: 5 / 9;
  grid-column: 1;
  display: flex;
  flex-direction: column;
  height: 61px;
  background: #fff;
  color: #000;
  padding-left: 2px;
  padding-top: 1px;
  border-right: 1px solid #000;
  border-bottom: 1px solid #000;
  line-height: 16px;
}
.pv-rows span {
  height: 15px;
  flex: none;
}
.pv-rows .total {
  font-weight: bold;
  margin-left: -2px;
  padding-left: 2px;
  border-top: 3px double #7d9240;
  height: 16px;
  line-height: 13px;
  margin-top: -2px;
}
.pv-values {
  grid-row: 5 / 9;
  grid-column: 2;
  position: relative;
  height: 61px;
  background: #fff;
  border-right: 1px solid #000;
  border-bottom: 1px solid #000;
  text-align: center;
  padding-top: 19px;
}
.pv-values::after {
  content: "";
  position: absolute;
  left: 0;
  right: 0;
  top: 44px;
  border-top: 3px double #7d9240;
}
.pv-values span {
  font: 16px/18px "Liberation Sans", sans-serif;
  color: #b0b0b0;
  text-shadow: 1px 1px 0 #8a8a8a;
}

/* overlays */
.close {
  width: 13px;
  height: 13px;
  border-radius: 50%;
  background: #c8c8c8;
  color: #444;
  font: bold 12px/12px "DejaVu Sans", sans-serif;
  text-align: center;
  position: absolute;
}
.bubble {
  position: absolute;
  left: 201px;
  top: 239px;
  width: 343px;
  height: 131px;
  padding-top: 20px;
  border-radius: 8px;
  background: rgba(55, 55, 55, .88);
  box-shadow: 0 2px 6px rgba(0, 0, 0, .45);
  color: #fff;
  text-align: center;
}
.bubble .close {
  left: 5px;
  top: 3px;
}
.bubble h3 {
  margin: 0 0 9px;
  font-size: 11.900px;
  line-height: 17px;
}
.bubble p {
  margin: 0 0 10px;
  line-height: 14px;
  font-size: 10.500px;
}
.learn {
  text-decoration: underline;
  line-height: 14px;
  font-size: 10.500px;
}
.builder {
  position: absolute;
  left: 793px;
  top: 127px;
  width: 295px;
  height: 488px;
  padding: 0 10px 0 9px;
  border-radius: 8px;
  background: rgba(50, 50, 50, .9);
  box-shadow: 0 3px 8px rgba(0, 0, 0, .5);
  color: #fff;
}
.builder-title {
  height: 18px;
  text-align: center;
  font-size: 11px;
  line-height: 18px;
  color: #eee;
}
.builder-title .close {
  left: 4px;
  top: 3px;
}
.builder-search {
  width: 108px;
  height: 16px;
  margin: 7px 0 0 166px;
  padding-left: 6px;
  display: flex;
  align-items: center;
  gap: 5px;
  border-radius: 8px;
  background: #777;
  font-size: 11px;
  color: #666;
}
.field-name {
  margin-top: 11px;
  margin-left: -1px;
  height: 16px;
  font-size: 11px;
  line-height: 17px;
  font-weight: bold;
}
.field-list {
  height: 97px;
  background: #343434;
  border: 1px solid #2c2c2c;
}
.field {
  height: 20px;
  display: flex;
  align-items: center;
  font-size: 12px;
  padding-bottom: 2px;
}
.check {
  width: 12px;
  height: 12px;
  margin: 2px 13px 0 7px;
  border-radius: 2px;
  background: linear-gradient(#666, #444);
  border: 1px solid #222;
  box-shadow: 0 1px 0 #555;
  color: #ddd;
  font-size: 9px;
  line-height: 10px;
  text-align: center;
}
.check.on::before {
  content: "✓";
}
.sash {
  width: 3px;
  height: 3px;
  margin: 7px 0 0 136px;
  background: #999;
}
.drag-title {
  margin-top: 9px;
  height: 18px;
  text-align: center;
  font-size: 11px;
  font-weight: bold;
  line-height: 18px;
}
.areas {
  display: grid;
  grid-template-columns: 136px 134px;
  column-gap: 3px;
  margin: 7px 0 0 3px;
}
.area-title {
  height: 21px;
  display: flex;
  align-items: center;
  gap: 7px;
  padding-left: 2px;
  font-size: 11px;
  font-weight: bold;
}
.area:nth-child(n+3) .area-title {
  margin-top: 4px;
  height: 24px;
}
.area-box {
  height: 104px;
  padding: 2px 4px;
  background: #343434;
  border: 1px solid #282828;
}
.pill {
  height: 17px;
  display: flex;
  align-items: center;
  padding: 0 3px 3px 4px;
  border-radius: 4px;
  background: linear-gradient(#5c5c5c, #3a3a3a);
  border: 1px solid #222;
  box-shadow: 0 1px 0 #555;
  font-size: 11px;
}
.grip {
  width: 2px;
  height: 8px;
  margin: 3px 12px 0 0;
  background: repeating-linear-gradient(#aaa 0 2px, transparent 2px 5px);
}
.info {
  margin: 3px 0 0 auto;
  width: 13px;
  height: 13px;
  border-radius: 50%;
  background: #444;
  border: 1px solid #888;
  font: italic bold 10px/11px "Liberation Serif", serif;
  text-align: center;
}
.sigma.small {
  width: 17px;
  margin-right: 2px;
  font-size: 18px;
  line-height: 20px;
  color: #3f86d8;
  text-align: center;
}
.cursor {
  position: absolute;
  left: 830px;
  top: 109px;
}
```
